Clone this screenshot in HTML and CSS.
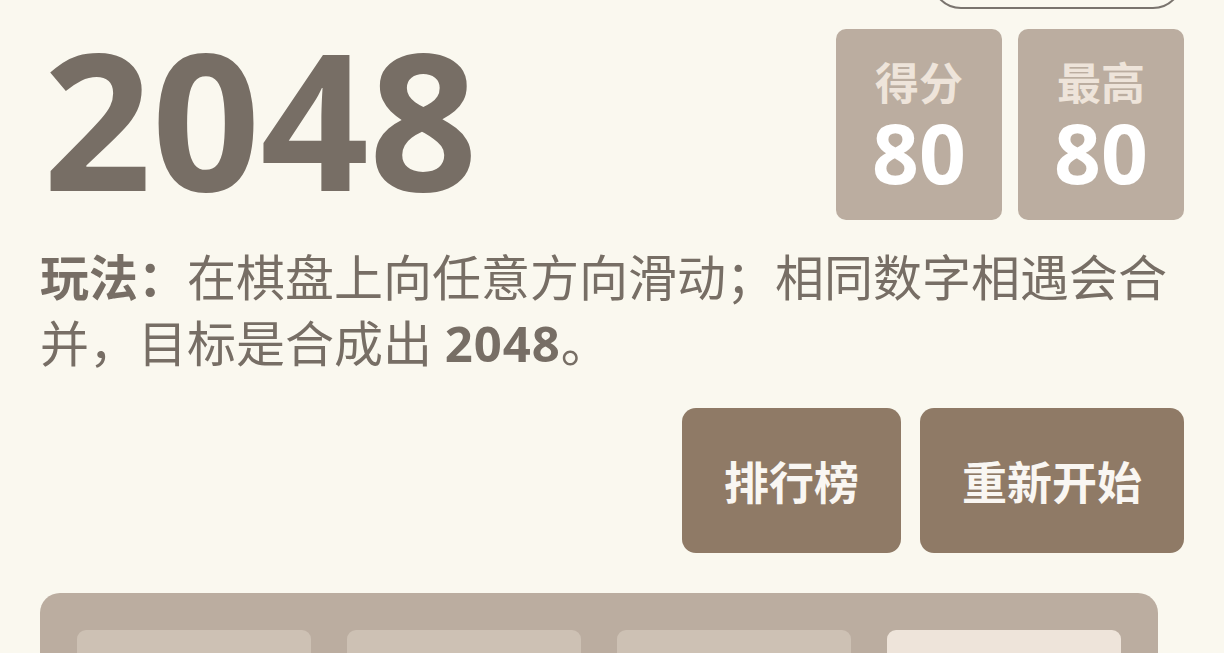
FILE: index.html
```html
<!DOCTYPE html>
<html lang="zh-CN">
<head>
<meta charset="utf-8">
<title>2048</title>
<link rel="stylesheet" href="styles.css">
</head>
<body>
<div class="page">
  <div class="top-pill"></div>
  <header class="header">
    <h1 class="title">2048</h1>
    <div class="scores">
      <div class="score-box">
        <div class="score-label">得分</div>
        <div class="score-value">80</div>
      </div>
      <div class="score-box">
        <div class="score-label">最高</div>
        <div class="score-value">80</div>
      </div>
    </div>
  </header>
  <p class="intro"><strong>玩法：</strong>在棋盘上向任意方向滑动；相同数字相遇会合并，目标是合成出 <strong class="num">2048</strong>。</p>
  <div class="actions">
    <button class="btn">排行榜</button>
    <button class="btn">重新开始</button>
  </div>
  <div class="board">
    <div class="tile"></div>
    <div class="tile"></div>
    <div class="tile"></div>
    <div class="tile tile-2"></div>
  </div>
</div>
</body>
</html>
```
FILE: styles.css
```css
html, body {
  margin: 0;
  padding: 0;
  background: #faf8ef;
  overflow: hidden;
}
body {
  font-family: "Open Sans", "Noto Sans CJK SC", sans-serif;
  color: #776e65;
}
.page {
  padding: 0 40px;
  display: flex;
  flex-direction: column;
}
.top-pill {
  align-self: flex-end;
  width: 252px;
  height: 60px;
  margin-top: -51px;
  margin-right: 1px;
  border: 2px solid #7a746e;
  border-radius: 32px;
  box-sizing: border-box;
}
.header {
  display: flex;
  justify-content: space-between;
  align-items: flex-start;
  margin-top: 20px;
}
.title {
  margin: -6px 0 0 3px;
  font-family: "Open Sans", sans-serif;
  font-size: 190px;
  line-height: 1;
  font-weight: 700;
  color: #776e65;
}
.scores {
  display: flex;
  gap: 16px;
}
.score-box {
  width: 166px;
  height: 191px;
  background: #bbada0;
  border-radius: 10px;
  display: flex;
  flex-direction: column;
  align-items: center;
  text-align: center;
}
.score-label {
  font-family: "Noto Sans CJK SC", sans-serif;
  font-size: 44px;
  font-weight: 700;
  color: #eee4da;
  line-height: 1;
  margin-top: 30px;
}
.score-value {
  font-family: "Open Sans", sans-serif;
  font-size: 82px;
  font-weight: 700;
  color: #ffffff;
  line-height: 1;
  margin-top: 8px;
}
.intro {
  margin: 24px 0 0;
  font-size: 49px;
  line-height: 66px;
}
.intro strong {
  font-weight: 700;
}
.intro .num {
  letter-spacing: 1px;
}
.actions {
  display: flex;
  justify-content: flex-end;
  gap: 19px;
  margin-top: 32px;
}
.btn {
  height: 145px;
  padding: 0 42px;
  border: none;
  border-radius: 14px;
  background: #8f7a66;
  color: #f9f6f2;
  font-family: "Noto Sans CJK SC", sans-serif;
  font-size: 45px;
  font-weight: 700;
}
.board {
  margin-top: 40px;
  width: 1118px;
  box-sizing: border-box;
  padding: 37px;
  background: #bbada0;
  border-radius: 20px;
  display: grid;
  grid-template-columns: repeat(4, 234px);
  gap: 36px;
}
.tile {
  height: 234px;
  border-radius: 9px;
  background: #cdc1b4;
}
.tile-2 {
  background: #eee4da;
}
```
